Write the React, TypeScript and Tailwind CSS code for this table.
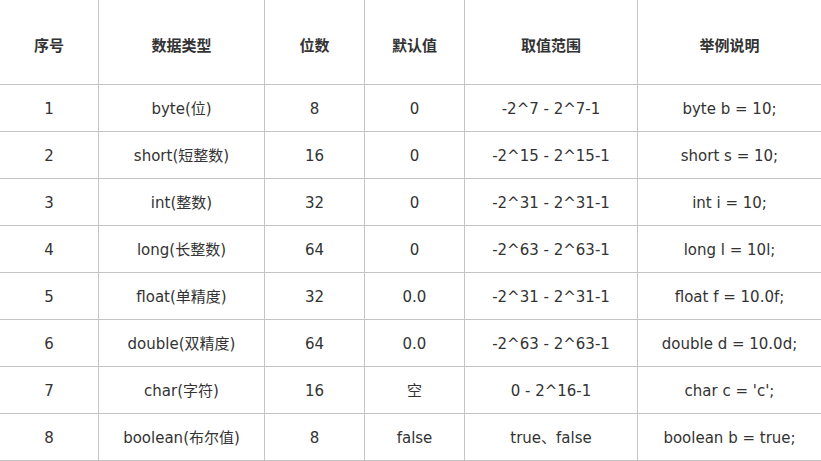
import React from 'react';

const headers = ['序号', '数据类型', '位数', '默认值', '取值范围', '举例说明'];

const rows: string[][] = [
  ['1', 'byte(位)', '8', '0', '-2^7 - 2^7-1', 'byte b = 10;'],
  ['2', 'short(短整数)', '16', '0', '-2^15 - 2^15-1', 'short s = 10;'],
  ['3', 'int(整数)', '32', '0', '-2^31 - 2^31-1', 'int i = 10;'],
  ['4', 'long(长整数)', '64', '0', '-2^63 - 2^63-1', 'long l = 10l;'],
  ['5', 'float(单精度)', '32', '0.0', '-2^31 - 2^31-1', 'float f = 10.0f;'],
  ['6', 'double(双精度)', '64', '0.0', '-2^63 - 2^63-1', 'double d = 10.0d;'],
  ['7', 'char(字符)', '16', '空', '0 - 2^16-1', "char c = 'c';"],
  ['8', 'boolean(布尔值)', '8', 'false', 'true、false', 'boolean b = true;'],
];

export default function App() {
  return (
    <div
      className="w-[821px] h-[461px] bg-white text-[#333333] text-[15px] overflow-hidden"
      style={{ fontFamily: '"DejaVu Sans", "Noto Sans CJK SC", sans-serif' }}
    >
      <div className="grid grid-cols-[98px_166px_100px_100px_173px_184px]">
        {headers.map((h, i) => (
          <div
            key={h}
            className={`h-[85px] pt-2 flex items-center justify-center font-bold border-b border-[#c4c4c4] ${i > 0 ? 'border-l' : ''}`}
          >
            {h}
          </div>
        ))}
        {rows.map((r) =>
          r.map((c, i) => (
            <div
              key={r[0] + '-' + i}
              className={`h-[47px] pt-[2px] flex items-center justify-center border-b border-[#c4c4c4] whitespace-nowrap ${i > 0 ? 'border-l' : ''}`}
            >
              {c}
            </div>
          ))
        )}
      </div>
    </div>
  );
}
